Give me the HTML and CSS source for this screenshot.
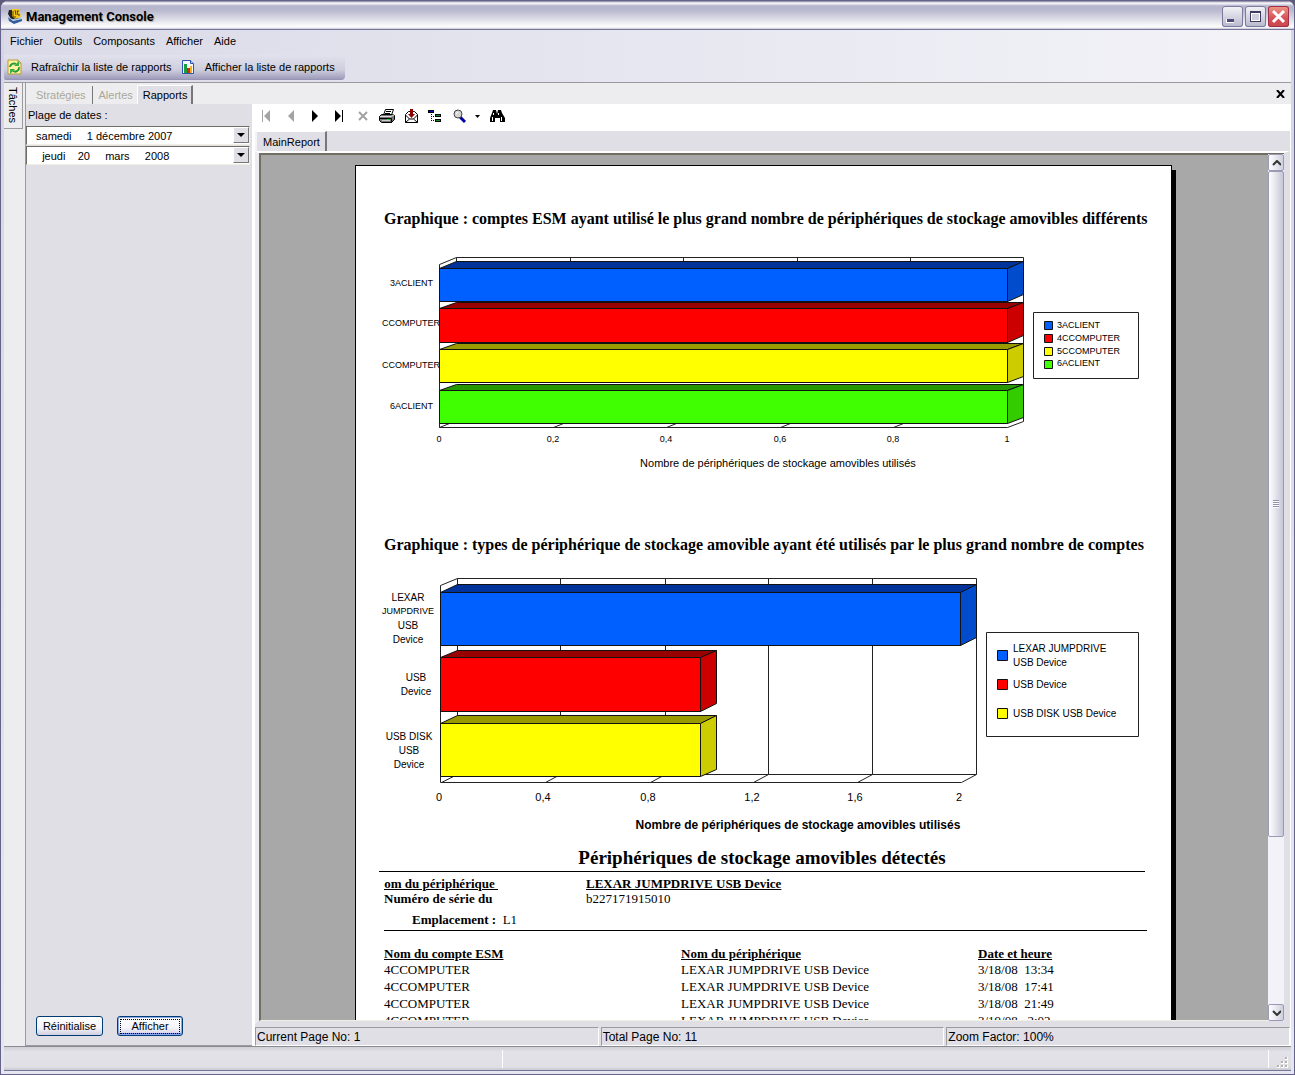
FILE: index.html
```html
<!DOCTYPE html>
<html lang="fr">
<head>
<meta charset="utf-8">
<title>Management Console</title>
<link rel="stylesheet" href="styles.css">
</head>
<body>
<div class="window">
  <header class="titlebar">
    <svg class="app-icon" width="16" height="16" viewBox="0 0 16 16">
      <path d="M2 2h7l2 9H4L1 6z" fill="#222"/>
      <path d="M5 1h7l2 8-6 2-3-3z" fill="#f4c81e"/>
      <path d="M6 3v6h3M8 2l1 5M12 3h-2l1 4h2" fill="none" stroke="#5a4308" stroke-width="1"/>
      <path d="M1 9l5 4 9-2v2l-8 3-5-3z" fill="#2f5d9c"/>
      <path d="M1 9l5 3 8-2" fill="none" stroke="#8fb2de"/>
    </svg>
    <h1 class="title">Management Console</h1>
    <div class="window-buttons">
      <button class="win-btn" type="button" aria-label="Réduire"><svg width="21" height="21" shape-rendering="crispEdges"><path d="M4 13h8v4H4z" fill="#fff"/><path d="M5 13h7v3H5z" fill="#4d4a78"/></svg></button>
      <button class="win-btn" type="button" aria-label="Agrandir"><svg width="21" height="21" shape-rendering="crispEdges"><path d="M5 5h11v11H5z" fill="#3d3a60"/><path d="M6 7h9v8H6z" fill="#fff"/><path d="M7 8h7v6H7z" fill="#cfcfde"/></svg></button>
      <button class="win-btn win-close" type="button" aria-label="Fermer"><svg width="21" height="21"><path d="M5 5l11 11M16 5L5 16" stroke="#fff" stroke-width="3"/></svg></button>
    </div>
  </header>

  <div class="command-area">
    <nav class="menubar">
      <a href="#">Fichier</a><a href="#">Outils</a><a href="#">Composants</a><a href="#">Afficher</a><a href="#">Aide</a>
    </nav>
    <div class="toolbar">
      <button type="button" class="tool">
        <svg width="16" height="16" viewBox="0 0 16 16"><path d="M2 1h10l3 3v11H2z" fill="#fff3a0" stroke="#b89a3c"/><path d="M12 1v3h3z" fill="#fff" stroke="#b89a3c"/><path d="M4 8a4 4 0 0 1 6-3M13 8a4 4 0 0 1-6 4" fill="none" stroke="#2b9a3a" stroke-width="2"/><path d="M8 7h5V2zM9 10H4v5z" fill="#35b048"/></svg>
        <span>Rafraîchir la liste de rapports</span>
      </button>
      <button type="button" class="tool">
        <svg width="16" height="16" viewBox="0 0 16 16"><path d="M2.500 1.500h8l3 3v10h-11z" fill="#f4f8ff" stroke="#2a55b0"/><path d="M10.500 1.500v3h3" fill="#b9d0f4" stroke="#2a55b0"/><path d="M4 5h3v9H4z" fill="#18a03c"/><path d="M7 9h3v5H7z" fill="#d3261c"/><path d="M10 7h2v7h-2z" fill="#f0b414"/></svg>
        <span>Afficher la liste de rapports</span>
      </button>
    </div>
  </div>

  <div class="main">
    <aside class="task-strip"><button type="button" class="task-tab">Tâches</button></aside>
    <div class="workspace">
      <div class="tabs">
        <button type="button" class="tab" disabled>Stratégies</button>
        <button type="button" class="tab" disabled>Alertes</button>
        <button type="button" class="tab tab-active">Rapports</button>
        <button type="button" class="close-doc" aria-label="Fermer le document"><svg width="9" height="8" viewBox="0 0 9 8"><path d="M1 0l7 8M8 0L1 8" stroke="#000" stroke-width="2"/></svg></button>
      </div>
      <div class="columns">
        <form class="filters">
          <label class="filter-label" for="from">Plage de dates :</label>
          <div class="picker">
            <select id="from"><option>&nbsp;samedi &nbsp; &nbsp; 1 décembre 2007</option></select>
            <span class="picker-arrow"></span>
          </div>
          <div class="picker">
            <select id="to" aria-label="Date de fin"><option>&nbsp; &nbsp;jeudi &nbsp; &nbsp;20 &nbsp; &nbsp; mars &nbsp; &nbsp; 2008</option></select>
            <span class="picker-arrow"></span>
          </div>
          <div class="filter-actions">
            <button type="button" class="xp-btn">Réinitialise</button>
            <button type="button" class="xp-btn xp-default"><span>Afficher</span></button>
          </div>
        </form>

        <section class="report">
          <div class="report-tools">
            <button type="button" disabled aria-label="Première page"><svg width="16" height="16" viewBox="0 0 16 16" fill="#a3a3a3"><path d="M3 2h1v12H3zM11 2v12L5 8z"/></svg></button>
            <button type="button" disabled aria-label="Page précédente"><svg width="16" height="16" viewBox="0 0 16 16" fill="#a3a3a3"><path d="M11 2v12L5 8z"/></svg></button>
            <button type="button" aria-label="Page suivante"><svg width="16" height="16" viewBox="0 0 16 16"><path d="M5 2v12l6-6z"/></svg></button>
            <button type="button" aria-label="Dernière page"><svg width="16" height="16" viewBox="0 0 16 16"><path d="M4 2v12l6-6zM11 2h1v12h-1z"/></svg></button>
            <button type="button" disabled aria-label="Arrêter"><svg width="16" height="16" viewBox="0 0 16 16"><path d="M4 4l8 8M12 4l-8 8" stroke="#a3a3a3" stroke-width="2"/></svg></button>
            <button type="button" aria-label="Imprimer"><svg width="16" height="16" viewBox="0 0 16 16"><path d="M4.500 7l2-5.500h8L12.500 7z" fill="#fff" stroke="#000"/><path d="M7 3.500h5M6 5.500h5" stroke="#000"/><path d="M.5 8.500l2-2h11l2 1v4l-3 3h-10l-2-2z" fill="#777" stroke="#000"/><path d="M1 8.500h11l3-1.500" fill="none" stroke="#ddd"/><path d="M1 10.500h11.500v4" fill="none" stroke="#000"/><path d="M8 11h2v1H8z" fill="#0f0"/><path d="M3 12.500h8" stroke="#ccc"/></svg></button>
            <button type="button" aria-label="Exporter"><svg width="16" height="16" viewBox="0 0 16 16"><path d="M2.500 6.500l3-3h6l3 3v8h-12z" fill="#fff" stroke="#000"/><path d="M2.500 7l4 4-4 3.500M14.500 7l-4 4 4 3.500M6.500 11h4" fill="none" stroke="#000"/><path d="M7 1h3v5h2l-3.500 4L5 6h2z" fill="#900000"/></svg></button>
            <button type="button" aria-label="Arborescence"><svg width="16" height="16" viewBox="0 0 16 16" shape-rendering="crispEdges"><path d="M1 2h6v3H1z"/><path d="M2 3h4v1H2z" fill="#0000d0"/><path d="M4 6h1v1H4zM4 8h1v1H4zM6 8h1v1H6zM4 10h1v1H4zM4 12h1v1H4zM6 12h1v1H6z"/><path d="M8 6h6v3H8zM8 11h6v3H8z"/><path d="M9 7h4v1H9zM9 12h4v1H9z" fill="#0a9020"/></svg></button>
            <button type="button" class="with-menu" aria-label="Zoom"><svg width="32" height="16" viewBox="0 0 32 16"><path d="M9 9l5 5" stroke="#0000a8" stroke-width="3"/><circle cx="7" cy="6" r="4" fill="#d5d5d5" stroke="#444"/><path d="M5 6l2-2" stroke="#fff"/><path d="M24 7h5l-2.500 3z"/></svg></button>
            <button type="button" aria-label="Rechercher"><svg width="16" height="16" viewBox="0 0 16 16"><path d="M4 2h3l1 4 1-4h3l1 3 3 5v4h-5v-4H6v4H1v-4l2-5z"/><path d="M4.500 5v2M3.500 9v4M9.500 5v2M12.500 9v4" stroke="#fff"/></svg></button>
          </div>
          <div class="report-tabs"><button type="button" class="tab tab-active">MainReport</button></div>
          <div class="viewer">
            <div class="viewport">
              <article class="paper">
                <h2 class="chart-title">Graphique : comptes ESM ayant utilisé le plus grand nombre de périphériques de stockage amovibles différents</h2>
                <svg class="chart chart-accounts" width="764" height="226" viewBox="382 250 764 226" font-size="9">
                  <g fill="none" stroke="#222">
                    <path d="M439.500 427.500V264.500L456.500 257.500H1023.500V421.500L1007.500 427.500H439.500M456.500 257.500V262M570.500 257V262M683.500 257V262M797.500 257V262M910.500 257V262M439.500 427.500l10-4M553.500 427.500l10-4M666.500 427.500l10-4M780.500 427.500l10-4M893.500 427.500l10-4"/>
                  </g>
                  <g stroke="#111" stroke-linejoin="round">
                    <path d="M439.500 268.500l17-7h567l-16 7z" fill="#003399"/><path d="M1007.500 268.500l16-7v33l-16 7z" fill="#004ccc"/><path d="M439.500 268.500h568v33h-568z" fill="#0060ff"/>
                    <path d="M439.500 308.500l17-6h567l-16 6z" fill="#990000"/><path d="M1007.500 308.500l16-6v33l-16 7z" fill="#cc0000"/><path d="M439.500 308.500h568v34h-568z" fill="#ff0000"/>
                    <path d="M439.500 349.500l17-6h567l-16 6z" fill="#999900"/><path d="M1007.500 349.500l16-6v33l-16 6z" fill="#cccc00"/><path d="M439.500 349.500h568v33h-568z" fill="#ffff00"/>
                    <path d="M439.500 390.500l17-6h567l-16 6z" fill="#269900"/><path d="M1007.500 390.500l16-6v33l-16 6z" fill="#33cc00"/><path d="M439.500 390.500h568v33h-568z" fill="#40ff00"/>
                  </g>
                  <g text-anchor="end"><text x="433" y="286">3ACLIENT</text><text x="440" y="326">CCOMPUTER</text><text x="440" y="368">CCOMPUTER</text><text x="433" y="409">6ACLIENT</text></g>
                  <g text-anchor="middle"><text x="439" y="442">0</text><text x="553" y="442">0,2</text><text x="666" y="442">0,4</text><text x="780" y="442">0,6</text><text x="893" y="442">0,8</text><text x="1007" y="442">1</text></g>
                  <text font-size="11" x="778" y="467" text-anchor="middle">Nombre de périphériques de stockage amovibles utilisés</text>
                  <path d="M1033.500 312.500h105v66h-105z" fill="#fff" stroke="#222"/>
                  <g stroke="#111"><path d="M1044.500 321.500h8v8h-8z" fill="#0060ff"/><path d="M1044.500 334.500h8v8h-8z" fill="#f00"/><path d="M1044.500 347.500h8v8h-8z" fill="#ff0"/><path d="M1044.500 360.500h8v8h-8z" fill="#40ff00"/></g>
                  <text x="1057" y="328">3ACLIENT</text><text x="1057" y="341">4CCOMPUTER</text><text x="1057" y="354">5CCOMPUTER</text><text x="1057" y="366">6ACLIENT</text>
                </svg>
                <h2 class="chart-title">Graphique : types de périphérique de stockage amovible ayant été utilisés par le plus grand nombre de comptes</h2>
                <svg class="chart chart-types" width="764" height="268" viewBox="382 572 764 268" font-size="10">
                  <g fill="none" stroke="#222">
                    <path d="M440.500 782.500V585.500L457.500 578.500H976.500V774.500L961.500 782.500H440.500M457.500 578.500V774.500H976.500M560.500 578.500V774.500l-15 8M665.500 578.500V774.500l-15 8M768.500 578.500V774.500l-15 8M872.500 578.500V774.500l-15 8M457.500 774.500l-16 8"/>
                  </g>
                  <g stroke="#111" stroke-linejoin="round">
                    <path d="M440.500 592.500l17-8h519l-16 8z" fill="#003399"/><path d="M960.500 592.500l16-8v53l-16 8z" fill="#004ccc"/><path d="M440.500 592.500h520v53h-520z" fill="#0060ff"/>
                    <path d="M440.500 657.500l17-7h259l-16 7z" fill="#990000"/><path d="M700.500 657.500l16-7v53l-16 8z" fill="#cc0000"/><path d="M440.500 657.500h260v54h-260z" fill="#ff0000"/>
                    <path d="M440.500 723.500l17-8h259l-16 8z" fill="#999900"/><path d="M700.500 723.500l16-8v54l-16 7z" fill="#cccc00"/><path d="M440.500 723.500h260v53h-260z" fill="#ffff00"/>
                  </g>
                  <g text-anchor="middle"><text x="408" y="601">LEXAR</text><text x="408" y="614" font-size="9">JUMPDRIVE</text><text x="408" y="629">USB</text><text x="408" y="643">Device</text><text x="416" y="681">USB</text><text x="416" y="695">Device</text><text x="409" y="740">USB DISK</text><text x="409" y="754">USB</text><text x="409" y="768">Device</text></g>
                  <g text-anchor="middle" font-size="11"><text x="439" y="801">0</text><text x="543" y="801">0,4</text><text x="648" y="801">0,8</text><text x="752" y="801">1,2</text><text x="855" y="801">1,6</text><text x="959" y="801">2</text></g>
                  <text x="798" y="829" text-anchor="middle" font-size="12" font-weight="bold">Nombre de périphériques de stockage amovibles utilisés</text>
                  <path d="M986.500 632.500h152v104h-152z" fill="#fff" stroke="#222"/>
                  <g stroke="#111"><path d="M997.500 650.500h10v10h-10z" fill="#0060ff"/><path d="M997.500 679.500h10v10h-10z" fill="#f00"/><path d="M997.500 708.500h10v10h-10z" fill="#ff0"/></g>
                  <text x="1013" y="652">LEXAR JUMPDRIVE</text><text x="1013" y="666">USB Device</text><text x="1013" y="688">USB Device</text><text x="1013" y="717">USB DISK USB Device</text>
                </svg>
                <h2 class="section-title">Périphériques de stockage amovibles détectés</h2>
                <dl class="device">
                  <dt class="clipped"><u>Nom du périphérique&nbsp;</u></dt><dd><b><u>LEXAR JUMPDRIVE USB Device</u></b></dd>
                  <dt>Numéro de série du</dt><dd>b227171915010</dd>
                </dl>
                <p class="location"><b>Emplacement :</b>&nbsp; L1</p>
                <table class="events">
                  <thead><tr><th>Nom du compte ESM</th><th>Nom du périphérique</th><th>Date et heure</th></tr></thead>
                  <tbody>
                    <tr><td>4CCOMPUTER</td><td>LEXAR JUMPDRIVE USB Device</td><td>3/18/08 &nbsp;13:34</td></tr>
                    <tr><td>4CCOMPUTER</td><td>LEXAR JUMPDRIVE USB Device</td><td>3/18/08 &nbsp;17:41</td></tr>
                    <tr><td>4CCOMPUTER</td><td>LEXAR JUMPDRIVE USB Device</td><td>3/18/08 &nbsp;21:49</td></tr>
                    <tr><td>4CCOMPUTER</td><td>LEXAR JUMPDRIVE USB Device</td><td>3/19/08 &nbsp; 2:02</td></tr>
                  </tbody>
                </table>
              </article>
            </div>
            <div class="scrollbar">
              <button type="button" class="scroll-btn" aria-label="Défiler vers le haut"><svg width="9" height="6"><path d="M1 5l4-4 4 4" fill="none" stroke="#333" stroke-width="2"/></svg></button>
              <div class="scroll-track"><div class="scroll-thumb"><span class="grip"></span></div></div>
              <button type="button" class="scroll-btn" aria-label="Défiler vers le bas"><svg width="9" height="6"><path d="M1 1l4 4 4-4" fill="none" stroke="#333" stroke-width="2"/></svg></button>
            </div>
          </div>
          <footer class="report-status"><span>Current Page No: 1</span><span>Total Page No: 11</span><span>Zoom Factor: 100%</span></footer>
        </section>
      </div>
    </div>
  </div>
  <footer class="statusbar"><span></span><span></span>
    <svg class="resize" width="12" height="12" shape-rendering="crispEdges"><path d="M8 0h3v3H8zM4 4h3v3H4zM8 4h3v3H8zM0 8h3v3H0zM4 8h3v3H4zM8 8h3v3H8z" fill="#fff"/><path d="M8 0h2v2H8zM4 4h2v2H4zM8 4h2v2H8zM0 8h2v2H0zM4 8h2v2H4zM8 8h2v2H8z" fill="#b5b3a6"/></svg>
  </footer>
</div>
</body>
</html>
```
FILE: styles.css
```css
* { box-sizing: border-box; }
body {
  margin: 0;
  height: 100vh;
  background: #5c5a78;
  font: 11px/14px "Liberation Sans", Arial, sans-serif;
  color: #000;
}
h1, h2, p, dl, dd { margin: 0; }
button, select { font: inherit; color: inherit; margin: 0; padding: 0; border: 0; background: none; }
svg { display: block; flex: none; }

.window {
  height: 100%;
  display: flex;
  flex-direction: column;
  padding: 0 3px 3px;
  border: 1px solid #66638a;
  border-radius: 8px 8px 0 0;
  background: linear-gradient(#d5d5e2, #e6e6f0);
  overflow: hidden;
}
.titlebar {
  flex: none;
  height: 29px;
  margin: 0 -3px;
  padding: 0 5px 0 6px;
  display: flex;
  align-items: center;
  gap: 3px;
  border-bottom: 1px solid #77759a;
  background: linear-gradient(#77759a 0, #fff 2px, #b4b4cc 5px, #b8b8ce 9px, #dcdce7 18px, #fff 26px, #c6c6d8 28px);
}
.title {
  flex: 1;
  font: bold 13px/18px Roboto, "Noto Sans", sans-serif;
  text-shadow: 1px 1px 1px #aaa;
  padding-top: 4px;
}
.app-icon { margin-top: 2px; }
.window-buttons { display: flex; gap: 2px; padding-top: 3px; }
.win-btn {
  width: 21px;
  height: 21px;
  border-radius: 3px;
  box-shadow: inset 0 0 0 1px #7b7ba0;
  background: linear-gradient(#f4f4f8, #b7b7cd);
}
.win-close { box-shadow: inset 0 0 0 1px #a03048; background: linear-gradient(#ee9a86, #d65058 60%, #c84850); }

.command-area {
  flex: none;
  height: 53px;
  border-bottom: 1px solid #9a9a9f;
  background: linear-gradient(90deg, #dadae8, #f3f3f8);
}
.menubar { display: flex; gap: 11px; height: 25px; padding: 4px 6px 0; }
.menubar a { color: #000; text-decoration: none; }
.toolbar {
  display: flex;
  width: max-content;
  height: 25px;
  align-items: center;
  padding: 0 10px 2px 2px;
  gap: 8px;
  border-radius: 2px 4px 4px 2px;
  background: linear-gradient(#e2e2ee, #cdcddd 60%, #9e9cbb 96%, #8e8cae);
}
.tool { display: flex; align-items: center; gap: 9px; }

.main { flex: 1; min-height: 0; display: flex; background: #ededef; }
.task-strip { flex: none; width: 22px; border-right: 1px solid #9a9a9f; }
.task-tab {
  writing-mode: vertical-rl;
  width: 19px;
  height: 46px;
  font-size: 11px;
  border: 1px solid #9a9a9f;
  border-left: 0;
  border-top: 0;
}
.workspace { flex: 1; min-width: 0; display: flex; flex-direction: column; }
.tabs { flex: none; height: 21px; display: flex; align-items: flex-end; padding-left: 4px; }
.tab { height: 18px; padding: 0 6px; }
.tab:disabled { color: #a9a79a; }
.tabs .tab:first-child { border-right: 1px solid #777; }
.tab-active { background: #e0dfe5; border: 1px solid #fff; border-right: 2px solid #777; border-bottom: 0; }
.tabs .tab-active { height: 19px; padding: 0 4px 0 5px; margin-left: -2px; }
.close-doc { margin: 0 6px 6px auto; }

.columns { flex: 1; min-height: 0; display: flex; background: #fff; }
.filters { flex: none; width: 226px; display: flex; flex-direction: column; background: #e0dfe5; border-bottom: 1px solid #9a9a9f; }
.filter-label { height: 22px; padding: 4px 2px; }
.picker { display: grid; grid-template: 20px / 1fr; padding-right: 2px; }
.picker > * { grid-area: 1 / 1; }
.picker select { appearance: none; height: 19px; padding: 0 6px; background: #fff; border: 1px solid #6f6d66; border-right-color: #eee; border-bottom-color: #f1efe2; }
.picker-arrow {
  justify-self: end;
  pointer-events: none;
  width: 16px;
  height: 16px;
  margin: 1px;
  border: 1px solid #fff;
  border-right-color: #777;
  border-bottom-color: #777;
  background: #e0dfe5;
  display: grid;
  place-items: center;
}
.picker-arrow::after { content: ""; border: 4px solid transparent; border-top-color: #000; border-bottom: 0; }
.filter-actions { margin-top: auto; display: flex; gap: 14px; padding: 0 10px 9px; }
.xp-btn { width: 67px; height: 20px; border: 1px solid #003c74; border-radius: 3px; background: linear-gradient(#fff, #f4f4fa 60%, #cfcfe0); }
.xp-default { width: 66px; padding: 1px; box-shadow: inset 0 0 0 1px #8ba8e8, inset 0 -2px 0 #6c88e8; }
.xp-default span { display: block; height: 15px; margin: 0 1px; line-height: 13px; border: 1px dotted #000; }

.report { flex: 1; min-width: 0; display: flex; flex-direction: column; padding: 0 1px 0 3px; }
.report-tools { flex: none; height: 27px; display: flex; align-items: center; gap: 8px; padding: 0 4px 3px; }
.with-menu { margin-right: -2px; }
.report-tabs { flex: none; height: 20px; background: #e0dfe5; border-left: 2px solid #f4f4f8; display: flex; }
.report-tabs .tab { padding: 0 5px 0 6px; height: 21px; border-left: 0; }
.viewer {
  flex: 1;
  min-height: 0;
  display: flex;
  border: solid #fff;
  border-width: 2px 6px 3px 4px;
  border-color: #fff #e0dfe5 #e0dfe5 #ececf0;
  box-shadow: 0 1px 0 #777;
  background: #a8a8a8;
}
.viewport { flex: 1; min-width: 0; overflow: hidden; border: 2px solid #716f64; border-right: 0; border-bottom: 1px solid #f1efe2; padding: 10px 2px 0 0; }
.paper { width: 817px; height: 1056px; margin: 0 auto; padding: 43px 24px 0 26px; background: #fff; border: 1px solid #000; box-shadow: 4px 5px 0 #000; font: 13px/15px "Liberation Serif", "Times New Roman", serif; }
.chart { font-family: "Liberation Sans", Arial, sans-serif; }
.chart-accounts { margin: 21px 0 59px; }
.chart-types { margin: 17px 0 5px; }
.chart-title { font-size: 16px; line-height: 20px; white-space: nowrap; padding-left: 2px; }
.section-title { margin: 0 2px 0 -3px; font-size: 19px; line-height: 26px; text-align: center; border-bottom: 1px solid #000; }
.device { display: grid; grid-template-columns: 114px 1fr; column-gap: 88px; padding: 4px 2px 6px; }
.device dt { font-weight: bold; white-space: nowrap; }
.clipped { display: flex; justify-content: flex-end; overflow: hidden; }
.location { margin-left: 2px; padding: 0 0 3px 28px; border-bottom: 1px solid #000; }
.events { width: 100%; margin-top: 14px; border-collapse: collapse; table-layout: fixed; }
.events th, .events td { padding: 0 2px; height: 17px; text-align: left; white-space: nowrap; }
.events th:first-child, .events th:nth-child(2) { width: 297px; }
.events th { text-decoration: underline; height: 16px; }

.scrollbar { flex: none; width: 16px; display: flex; flex-direction: column; background: #f2f2f8; border-top: 1px solid #716f64; }
.scroll-btn { flex: none; height: 17px; display: grid; place-items: center; border: 1px solid #9a9ab4; border-radius: 2px; background: linear-gradient(90deg, #fff, #cfcfde); }
.scroll-track { flex: 1; }
.scroll-thumb { height: 80%; display: grid; place-items: center; border: 1px solid #9a9ab4; border-radius: 2px; background: linear-gradient(90deg, #fff, #c6c6d8); }
.grip { width: 6px; height: 8px; background: repeating-linear-gradient(#9090ac 0 1px, #fff 1px 2px); }

.report-status { flex: none; height: 22px; display: flex; gap: 2px; padding: 3px 0 0; background: #e0dfe5; font-size: 12px; line-height: 18px; }
.report-status span { flex: 1; padding-left: 1px; border: 1px solid #9a9a9f; border-right-color: #fff; border-bottom-color: #fff; white-space: nowrap; }

.statusbar { flex: none; height: 25px; display: flex; align-items: center; border-top: 1px solid #8a8a92; border-bottom: 1px solid #77759a; background: linear-gradient(#cfcfd6, #e2e2e8 5px, #e0dfe5 20px, #c8c8d0); }
.statusbar span { height: 18px; flex: 39; border-right: 1px solid #fff; }
.statusbar span + span { flex: 60; }
.resize { margin: 8px 2px 0 8px; }
```
